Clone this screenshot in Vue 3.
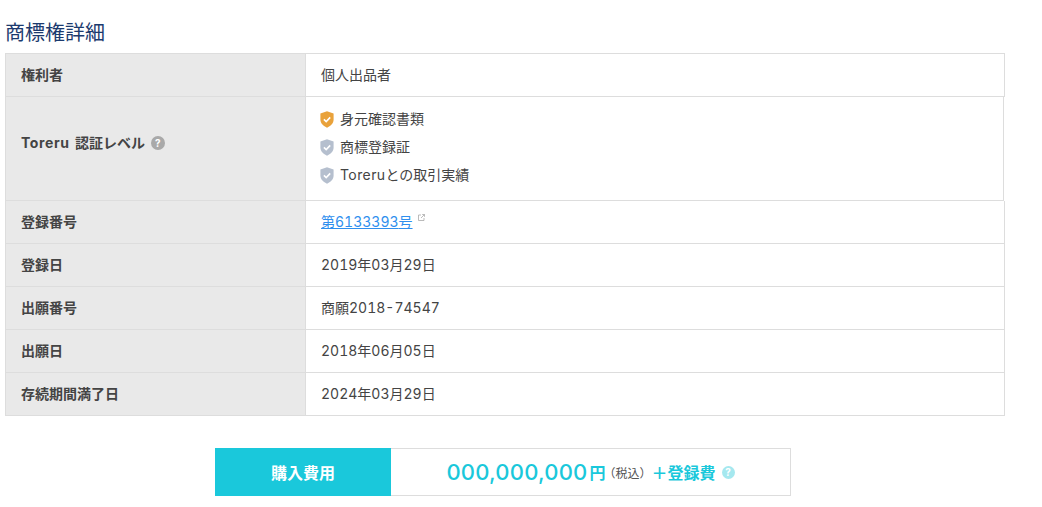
<script setup>
const parts = (s) =>
  s.split(/([0-9][0-9-]*)/).filter(Boolean).map((t) => ({ t, lat: /^[0-9]/.test(t) }))
const rows1 = [{ k: '権利者', v: '個人出品者' }]
const rows2 = [
  { k: '登録日', v: '2019年03月29日' },
  { k: '出願番号', v: '商願2018-74547' },
  { k: '出願日', v: '2018年06月05日' },
  { k: '存続期間満了日', v: '2024年03月29日' },
].map((r) => ({ ...r, p: parts(r.v) }))
const certs = [
  { t: '身元確認書類', on: true },
  { t: '商標登録証', on: false },
  { en: 'Toreru', t: 'との取引実績', on: false },
]
</script>

<template>
  <div class="page">
    <h2 class="title">商標権詳細</h2>
    <div class="table">
      <div v-for="r in rows1" :key="r.k" class="row">
        <div class="th"><span class="lift">{{ r.k }}</span></div>
        <div class="td"><span class="lift">{{ r.v }}</span></div>
      </div>
      <div class="row row-cert">
        <div class="th th-cert">
          <span class="lift"><span class="th-en">Toreru</span> 認証レベル</span>
          <span class="help">?</span>
        </div>
        <div class="td td-cert">
          <div v-for="c in certs" :key="c.t" class="cert">
            <svg class="shield" width="14" height="17" viewBox="0 0 14 17">
              <path :fill="c.on ? '#e9a23b' : '#b5bfce'" d="M7 0.3 L13.6 2.4 V8.6 C13.6 12.6 10.4 15.2 7 16.7 C3.6 15.2 0.4 12.6 0.4 8.6 V2.4 Z" />
              <path d="M3.9 8.4 L6.2 10.6 L10.2 6.4" fill="none" stroke="#fff" stroke-width="1.6" />
            </svg>
            <span class="lift"><span v-if="c.en" class="cert-en">{{ c.en }}</span>{{ c.t }}</span>
          </div>
        </div>
      </div>
      <div class="row">
        <div class="th"><span class="lift">登録番号</span></div>
        <div class="td">
          <a class="link lift">第<span class="lat">6133393</span>号</a>
          <svg class="ext" width="7" height="7" viewBox="0 0 7 7">
            <path d="M3 1H.5V6.5H6V4M3 4L6.5.5M4.2.5H6.5V2.8" fill="none" stroke="#aaa" stroke-width=".8" />
          </svg>
        </div>
      </div>
      <div v-for="r in rows2" :key="r.k" class="row">
        <div class="th"><span class="lift">{{ r.k }}</span></div>
        <div class="td">
          <span class="lift"><span v-for="(s, i) in r.p" :key="i" :class="{ lat: s.lat }">{{ s.t }}</span></span>
        </div>
      </div>
    </div>
    <div class="price">
      <div class="price-label">購入費用</div>
      <div class="price-box">
        <span class="num">000,000,000</span>
        <span class="yen">円</span>
        <span class="tax">（税込）</span>
        <span class="fee">＋登録費</span>
        <span class="help help-cyan">?</span>
      </div>
    </div>
  </div>
</template>

<style>
html, body { margin: 0; background: #fff; }
</style>

<style scoped>
.page {
  width: 1042px;
  height: 507px;
  overflow: hidden;
  box-sizing: border-box;
  padding: 19px 0 0 5px;
  font-family: "Inter", "Noto Sans CJK JP", sans-serif;
  color: #444;
  font-size: 14px;
}
.title {
  margin: 0 0 8px;
  font-size: 20px;
  line-height: 26px;
  height: 26px;
  font-weight: 400;
  color: #1c3a6e;
  padding-top: 1px;
  box-sizing: border-box;
}
.table {
  width: 1000px;
  border-top: 1px solid #ddd;
  display: flex;
  flex-direction: column;
}
.row {
  display: flex;
  height: 42px;
  border-bottom: 1px solid #ddd;
  border-right: 1px solid #ddd;
}
.row-cert {
  height: 103px;
  margin-right: 1px;
}
.th {
  width: 301px;
  flex: none;
  box-sizing: border-box;
  background: #e9e9e9;
  border-left: 1px solid #ddd;
  border-right: 1px solid #ddd;
  padding-left: 15px;
  display: flex;
  align-items: center;
  gap: 6px;
  font-weight: 700;
  font-size: 14px;
  color: #444;
}
.th-cert { padding-bottom: 12px; }
.th-en { letter-spacing: 0.6px; margin-right: 2px; }
.lift { position: relative; top: -1px; }
.td {
  flex: 1;
  padding-left: 15px;
  display: flex;
  align-items: center;
}
.lat { font-variant-numeric: tabular-nums; }
.td-cert {
  flex-direction: column;
  align-items: flex-start;
  justify-content: center;
  gap: 6px;
  padding-bottom: 3px;
  box-sizing: border-box;
}
.cert {
  display: flex;
  align-items: center;
  gap: 6px;
  height: 22px;
}
.cert-en { letter-spacing: 0.4px; }
.shield { flex: none; margin-left: -1px; }
.help {
  width: 14px;
  height: 14px;
  border-radius: 50%;
  background: #a9a9a9;
  color: #fff;
  font-size: 10px;
  font-weight: 700;
  display: inline-flex;
  align-items: center;
  justify-content: center;
}
.link {
  color: #2f8fee;
  text-decoration: underline;
}
.ext {
  margin: -9px 0 0 5px;
}
.price {
  display: flex;
  margin: 32px 0 0 210px;
  width: 576px;
  height: 48px;
}
.price-label {
  width: 176px;
  flex: none;
  background: #1ac8db;
  color: #fff;
  font-weight: 700;
  font-size: 16px;
  display: flex;
  align-items: center;
  justify-content: center;
}
.price-box {
  flex: 1;
  border: 1px solid #ddd;
  border-left: 0;
  display: flex;
  align-items: center;
  justify-content: center;
  color: #1ac8db;
  font-weight: 500;
}
.num { font-size: 22px; letter-spacing: 0.2px; font-weight: 500; }
.yen { font-size: 16px; margin-left: 2px; font-weight: 700; }
.tax { font-size: 12px; color: #555; font-weight: 400; margin-left: -2px; }
.fee { font-size: 16px; margin-left: 0; font-weight: 700; }
.help-cyan { background: #a5e8ef; margin-left: 6px; width: 13px; height: 13px; }
</style>
